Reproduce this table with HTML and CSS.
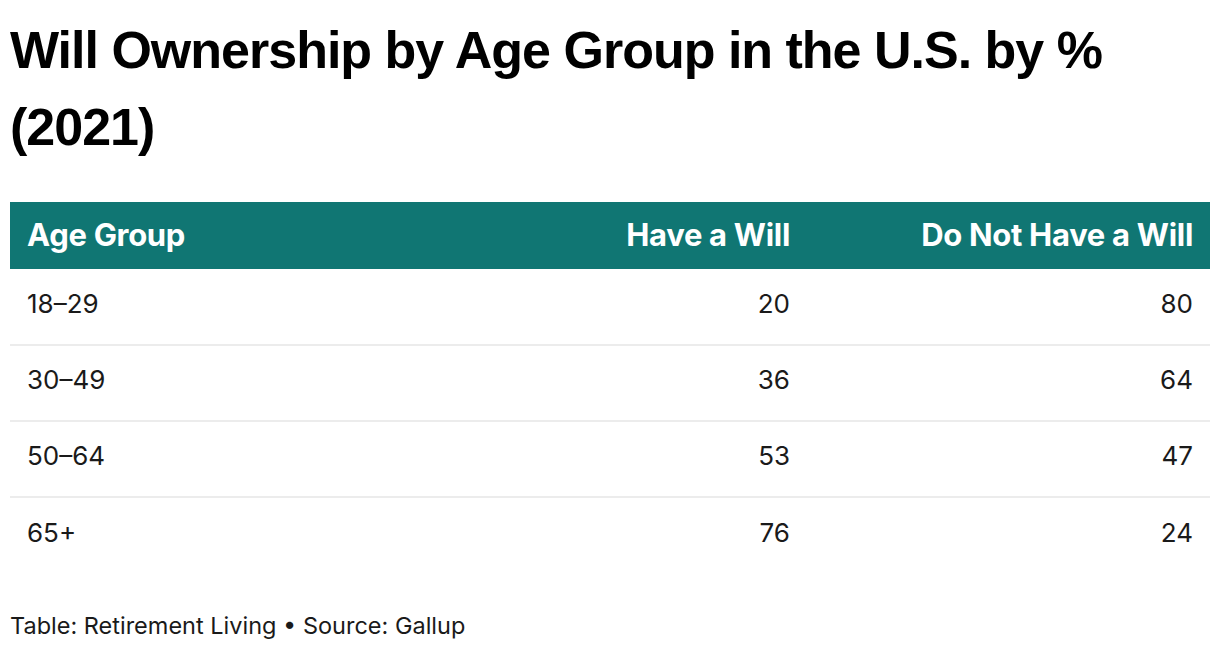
FILE: index.html
```html
<!DOCTYPE html>
<html lang="en">
<head>
<meta charset="utf-8">
<title>Will Ownership by Age Group</title>
<link rel="stylesheet" href="styles.css">
</head>
<body>
<div class="chart">
  <h1 class="title">Will Ownership by Age Group in the U.S. by % (2021)</h1>
  <table class="data">
    <thead>
      <tr>
        <th class="col-label">Age Group</th>
        <th class="col-num col-mid">Have a Will</th>
        <th class="col-num">Do Not Have a Will</th>
      </tr>
    </thead>
    <tbody>
      <tr><td class="col-label">18–29</td><td class="col-num col-mid">20</td><td class="col-num">80</td></tr>
      <tr><td class="col-label">30–49</td><td class="col-num col-mid">36</td><td class="col-num">64</td></tr>
      <tr><td class="col-label">50–64</td><td class="col-num col-mid">53</td><td class="col-num">47</td></tr>
      <tr><td class="col-label">65+</td><td class="col-num col-mid">76</td><td class="col-num">24</td></tr>
    </tbody>
  </table>
  <p class="footer">Table: Retirement Living • Source: Gallup</p>
</div>
</body>
</html>
```

FILE: styles.css
```css
html, body {
  margin: 0;
  padding: 0;
  background: #ffffff;
}

.chart {
  padding: 0 10px;
  color: #181818;
}

.title {
  font-family: "Liberation Sans", Arial, sans-serif;
  font-weight: 700;
  font-size: 52px;
  line-height: 77px;
  letter-spacing: -1px;
  margin: 12px 0 36px 0;
  color: #000000;
}

.data {
  width: 100%;
  border-collapse: collapse;
  table-layout: fixed;
}

.data th {
  background: #107673;
  color: #ffffff;
  font-family: Inter, "Noto Sans", sans-serif;
  font-weight: 700;
  font-size: 31px;
  letter-spacing: -0.3px;
  height: 67px;
  padding: 0 17px 3px 17px;
  box-sizing: border-box;
}

.data td {
  font-family: Inter, "Noto Sans", sans-serif;
  font-weight: 400;
  font-size: 26px;
  height: 76px;
  padding: 0 17px 7px 17px;
  box-sizing: border-box;
  border-top: 2px solid #ececec;
  color: #1a1a1a;
}

.data tbody tr:first-child td {
  border-top: none;
}

.col-label {
  text-align: left;
}

.col-num {
  text-align: right;
}

.data .col-mid {
  padding-right: 20px;
}

.footer {
  font-family: Inter, "Noto Sans", sans-serif;
  font-size: 23.5px;
  margin: 38px 0 0 0;
  color: #1a1a1a;
}
```
